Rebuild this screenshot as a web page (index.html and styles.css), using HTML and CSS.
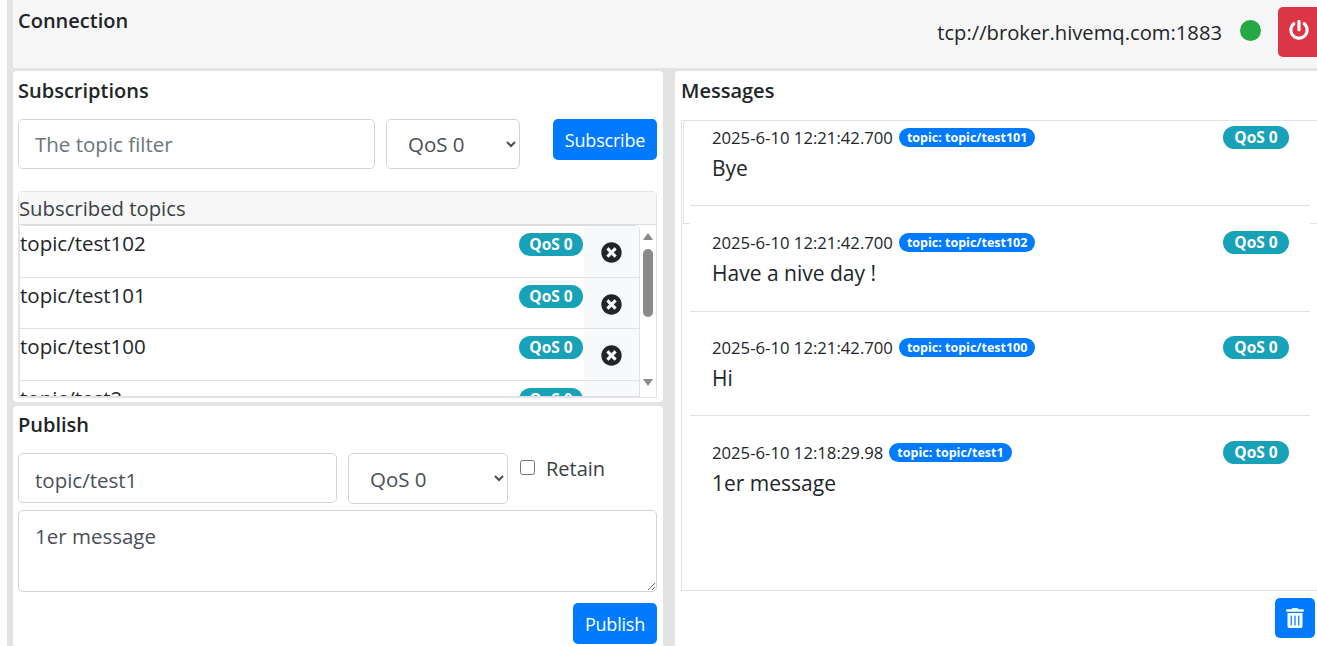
FILE: index.html
```html
<!DOCTYPE html>
<html lang="en">

<head>
    <meta charset="UTF-8">
    <meta name="viewport" content="width=device-width, initial-scale=1.0">
    <title>MQTT Client</title>
    <link rel="stylesheet" href="styles.css">
</head>

<body>
    <svg class="icon-defs" aria-hidden="true">
        <symbol id="i-power" viewBox="0 0 512 512">
            <path d="M400 54.100c63 45 104 118.600 104 201.900 0 136.800-110.800 247.700-247.500 248C120 504.300 8.200 393 8 256.400 7.900 173.100 48.900 99.300 111.800 54.200c11.700-8.300 28-4.800 35 7.700L162.600 90c5.900 10.500 3.100 23.800-6.600 31-41.500 30.800-68 79.600-68 134.900-.1 92.300 74.500 168.100 168 168.100 91.600 0 168.600-74.200 168-169.100-.3-51.800-24.700-101.800-68.100-134-9.700-7.200-12.400-20.500-6.400-30.900l15.800-28.100c7-12.400 23.200-16.100 34.800-7.800zM296 264V24c0-13.300-10.700-24-24-24h-32c-13.300 0-24 10.700-24 24v240c0 13.300 10.700 24 24 24h32c13.300 0 24-10.700 24-24z" />
        </symbol>
        <symbol id="i-close" viewBox="0 0 512 512">
            <path d="M256 8C119 8 8 119 8 256s111 248 248 248 248-111 248-248S393 8 256 8zm121.600 313.100c4.700 4.700 4.700 12.300 0 17L338 377.600c-4.700 4.700-12.300 4.700-17 0L256 312l-65.100 65.600c-4.700 4.700-12.300 4.700-17 0L134.400 338c-4.700-4.700-4.700-12.300 0-17l65.600-65-65.600-65.100c-4.700-4.700-4.700-12.300 0-17l39.600-39.600c4.700-4.700 12.300-4.700 17 0l65 65.700 65.100-65.600c4.700-4.700 12.300-4.700 17 0l39.600 39.600c4.700 4.700 4.700 12.300 0 17L312 256l65.600 65.100z" />
        </symbol>
        <symbol id="i-trash" viewBox="0 0 448 512">
            <path d="M32 464a48 48 0 0 0 48 48h288a48 48 0 0 0 48-48V128H32zm272-256a16 16 0 0 1 32 0v224a16 16 0 0 1-32 0zm-96 0a16 16 0 0 1 32 0v224a16 16 0 0 1-32 0zm-96 0a16 16 0 0 1 32 0v224a16 16 0 0 1-32 0zM432 32H312l-9.400-18.700A24 24 0 0 0 281.100 0H166.800a23.720 23.720 0 0 0-21.400 13.300L136 32H16A16 16 0 0 0 0 48v32a16 16 0 0 0 16 16h416a16 16 0 0 0 16-16V48a16 16 0 0 0-16-16z" />
        </symbol>
    </svg>

    <div class="app">
        <header class="connection">
            <h5>Connection</h5>
            <div class="status">
                <span class="broker">tcp://broker.hivemq.com:1883</span>
                <span class="dot"></span>
                <button class="btn btn-danger btn-power" type="button"><svg class="icon"><use href="#i-power" /></svg></button>
            </div>
        </header>

        <main class="columns">
            <div class="left">
                <section class="card subscriptions">
                    <h5>Subscriptions</h5>
                    <div class="sub-form">
                        <input class="field sub-topic" type="text" placeholder="The topic filter">
                        <select class="field sub-qos">
                            <option>QoS 0</option>
                        </select>
                        <button class="btn btn-primary btn-subscribe" type="button">Subscribe</button>
                    </div>

                    <div class="topics">
                        <div class="topics-header">Subscribed topics</div>
                        <div class="topics-body">
                            <ul class="topic-list">
                                <li class="topic">
                                    <span class="topic-name">topic/test102</span>
                                    <span class="badge badge-info">QoS 0</span>
                                    <span class="topic-remove"><svg class="icon"><use href="#i-close" /></svg></span>
                                </li>
                                <li class="topic">
                                    <span class="topic-name">topic/test101</span>
                                    <span class="badge badge-info">QoS 0</span>
                                    <span class="topic-remove"><svg class="icon"><use href="#i-close" /></svg></span>
                                </li>
                                <li class="topic">
                                    <span class="topic-name">topic/test100</span>
                                    <span class="badge badge-info">QoS 0</span>
                                    <span class="topic-remove"><svg class="icon"><use href="#i-close" /></svg></span>
                                </li>
                                <li class="topic">
                                    <span class="topic-name">topic/test2</span>
                                    <span class="badge badge-info">QoS 0</span>
                                    <span class="topic-remove"><svg class="icon"><use href="#i-close" /></svg></span>
                                </li>
                            </ul>
                            <div class="scrollbar">
                                <span class="arrow-up"></span>
                                <span class="thumb"></span>
                                <span class="arrow-down"></span>
                            </div>
                        </div>
                    </div>
                </section>

                <section class="card publish">
                    <h5>Publish</h5>
                    <div class="pub-form">
                        <input class="field pub-topic" type="text" value="topic/test1">
                        <select class="field pub-qos">
                            <option>QoS 0</option>
                        </select>
                        <label class="retain"><input type="checkbox"> Retain</label>
                    </div>
                    <textarea class="field pub-text">1er message</textarea>
                    <div class="actions">
                        <button class="btn btn-primary btn-publish" type="button">Publish</button>
                    </div>
                </section>
            </div>

            <section class="card messages">
                <h5>Messages</h5>
                <div class="message-list">
                    <article class="message">
                        <div class="message-head">
                            <span class="time">2025-6-10 12:21:42.700</span>
                            <span class="badge badge-primary">topic: topic/test101</span>
                            <span class="badge badge-info">QoS 0</span>
                        </div>
                        <p>Bye</p>
                    </article>
                    <article class="message">
                        <div class="message-head">
                            <span class="time">2025-6-10 12:21:42.700</span>
                            <span class="badge badge-primary">topic: topic/test102</span>
                            <span class="badge badge-info">QoS 0</span>
                        </div>
                        <p>Have a nive day !</p>
                    </article>
                    <article class="message">
                        <div class="message-head">
                            <span class="time">2025-6-10 12:21:42.700</span>
                            <span class="badge badge-primary">topic: topic/test100</span>
                            <span class="badge badge-info">QoS 0</span>
                        </div>
                        <p>Hi</p>
                    </article>
                    <article class="message last">
                        <div class="message-head">
                            <span class="time">2025-6-10 12:18:29.98</span>
                            <span class="badge badge-primary">topic: topic/test1</span>
                            <span class="badge badge-info">QoS 0</span>
                        </div>
                        <p>1er message</p>
                    </article>
                </div>
                <div class="actions">
                    <button class="btn btn-primary btn-trash" type="button"><svg class="icon"><use href="#i-trash" /></svg></button>
                </div>
            </section>
        </main>
    </div>
</body>

</html>
```

FILE: styles.css
```css
:root {
    --text: #212529;
    --input-text: #495057;
    --line: #dee2e6;
    --field-line: #ced4da;
    --gutter: #e3e3e3;
    --primary: #007bff;
    --info: #17a2b8;
    --danger: #dc3545;
    --success: #28a745;
}

* {
    box-sizing: border-box;
}

html,
body {
    height: 100%;
}

body {
    margin: 0;
    padding-left: 7px;
    overflow: hidden;
    color: var(--text);
    background: #fff;
    font-family: "Open Sans", "Noto Sans", sans-serif;
    font-size: 20.5px;
}

.icon-defs {
    display: none;
}

.icon {
    display: block;
    fill: currentColor;
}

.app {
    height: 646px;
    padding-left: 6px;
    background: var(--gutter);
    overflow: hidden;
}

h5 {
    margin: 0;
    font-size: 20px;
    font-weight: 600;
    line-height: 24px;
}

/* connection bar */
.connection {
    display: flex;
    justify-content: space-between;
    height: 68px;
    padding: 9px 0 0 5px;
    background: #f7f7f7;
}

.status {
    display: flex;
    align-items: flex-start;
    margin-top: -2px;
}

.broker {
    margin: 12px 18px 0 0;
    font-size: 20.2px;
    line-height: 26px;
}

.dot {
    width: 21px;
    height: 21px;
    margin: 13px 17px 0 0;
    border-radius: 50%;
    background: var(--success);
}

.btn {
    border: 0;
    border-radius: 5px;
    color: #fff;
    font: inherit;
    font-size: 18px;
    letter-spacing: -0.2px;
    padding: 0;
}

.btn-primary {
    background: var(--primary);
}

.btn-danger {
    background: var(--danger);
}

.btn-power {
    display: flex;
    justify-content: center;
    width: 39px;
    height: 50px;
    padding: 13px 0 0 2px;
    border-radius: 5px 0 0 5px;
}

.btn-power .icon {
    width: 20px;
    height: 20px;
}

/* columns */
.columns {
    display: grid;
    grid-template-columns: 650px 642px;
    gap: 12px;
    height: 575px;
    margin-top: 3px;
}

.left {
    display: flex;
    flex-direction: column;
    gap: 4px;
    height: 575px;
}

.card {
    padding: 8px 6px 0 5px;
    background: #fff;
    border-radius: 4px;
    overflow: hidden;
}

.subscriptions {
    height: 331px;
}

.publish {
    flex: 1;
    padding-top: 7px;
    border-radius: 4px 4px 0 0;
}

.field {
    height: 50px;
    border: 1px solid var(--field-line);
    border-radius: 5px;
    background: #fff;
    color: var(--input-text);
    font: inherit;
    padding: 0 16px;
}

select.field {
    padding-left: 17px;
}

.field::placeholder {
    color: #6c757d;
    opacity: 1;
}

.sub-form {
    display: flex;
    align-items: flex-start;
    margin-top: 16px;
}

.sub-topic {
    width: 357px;
    margin-right: 11px;
}

.sub-qos {
    width: 134px;
    margin-right: 33px;
}

.btn-subscribe {
    width: 104px;
    height: 41px;
}

/* subscribed topics */
.topics {
    margin-top: 22px;
    border: 1px solid #e4e4e4;
    border-bottom: 0;
    border-radius: 5px 5px 0 0;
}

.topics-header {
    height: 33px;
    padding-top: 3px;
    background: #f7f7f7;
    border-bottom: 1px solid #dcdcdc;
    color: #3b4147;
    font-size: 20.3px;
    line-height: 26px;
}

.topics-body {
    display: flex;
    height: 173px;
    overflow: hidden;
    border-bottom: 1px solid #e4e4e4;
}

.topic-list {
    flex: 1;
    margin: 0;
    padding: 0;
    list-style: none;
    border: 1px solid var(--line);
    border-radius: 5px 5px 0 0;
    overflow: hidden;
}

.topic {
    display: flex;
    align-items: flex-start;
    height: 51.6px;
    border-bottom: 1px solid var(--line);
}

.topic-name {
    flex: 1;
    line-height: 34px;
}

.badge {
    display: inline-block;
    border-radius: 12px;
    color: #fff;
    font-size: 15.5px;
    font-weight: 700;
    text-align: center;
}

.badge-info {
    width: 66px;
    height: 23px;
    background: var(--info);
    line-height: 23px;
}

.badge-primary {
    height: 19px;
    padding: 0 8px;
    background: var(--primary);
    font-size: 12.5px;
    line-height: 19px;
}

.topic .badge {
    width: 64px;
    margin: 7px 1px 0 0;
}

.topic-remove {
    display: flex;
    justify-content: center;
    width: 55px;
    height: 100%;
    padding-top: 16px;
    background: #f8f9fa;
    color: #212529;
}

.topic-remove .icon {
    width: 21px;
    height: 21px;
}

.scrollbar {
    display: flex;
    flex-direction: column;
    align-items: center;
    width: 16px;
    padding-top: 8px;
}

.arrow-up,
.arrow-down {
    width: 0;
    height: 0;
    border-left: 5px solid transparent;
    border-right: 5px solid transparent;
}

.arrow-up {
    border-bottom: 7px solid #8a8a8a;
}

.arrow-down {
    margin-top: 62px;
    border-top: 7px solid #8a8a8a;
}

.thumb {
    width: 10px;
    height: 68px;
    margin-top: 9px;
    border-radius: 5px;
    background: #8a8a8a;
}

/* publish */
.pub-form {
    display: flex;
    align-items: flex-start;
    margin-top: 16px;
}

.pub-topic {
    width: 319px;
    margin-right: 11px;
    padding-top: 3px;
}

.pub-qos {
    width: 160px;
    height: 51px;
    margin-right: 12px;
    padding-left: 18px;
}

.retain {
    display: flex;
    align-items: center;
    gap: 11px;
    margin-top: 2px;
    font-size: 20px;
    line-height: 28px;
    color: #3b4147;
}

.retain input {
    width: 15px;
    height: 15px;
    margin: -3px 0 0;
}

.pub-text {
    display: block;
    width: 100%;
    height: 82px;
    margin-top: 6px;
    padding-top: 11px;
    line-height: 28px;
}

.actions {
    display: flex;
    justify-content: flex-end;
}

.btn-publish {
    width: 84px;
    height: 41px;
    margin-top: 11px;
}

/* messages */
.messages {
    border-radius: 4px 0 0 0;
    padding-right: 0;
    padding-left: 6px;
}

.message-list {
    height: 471px;
    margin-top: 17px;
    border: 1px solid var(--line);
    border-right: 0;
    overflow: hidden;
}

.message {
    position: relative;
    height: 88px;
    margin: 0 7px 17px 8px;
    padding: 7px 21px 0 22px;
    border-bottom: 1px solid #e2e2e2;
}

.message:first-child {
    height: 85px;
    margin-bottom: 18px;
    padding-top: 5px;
}

.message:nth-child(3) {
    height: 87px;
    margin-bottom: 18px;
}

/* the first item is scrolled a little: its own frame still shows */
.message:first-child::before {
    content: "";
    position: absolute;
    top: -1px;
    left: -7px;
    width: 20px;
    height: 103px;
    border-top: 1px solid var(--line);
    border-left: 1px solid var(--line);
    border-top-left-radius: 5px;
}

.message:nth-child(2)::before,
.message:nth-child(2)::after {
    content: "";
    position: absolute;
    top: -1px;
    width: 7px;
    height: 1px;
    background: #e2e2e2;
}

.message:nth-child(2)::before {
    left: -7px;
}

.message:nth-child(2)::after {
    right: -7px;
}

.message.last {
    border-bottom: 0;
}

.message-head {
    display: flex;
    align-items: center;
    gap: 6px;
    height: 22px;
    font-size: 16.7px;
}

.message-head .badge-info {
    margin-left: auto;
}

.message p {
    margin: 6px 0 0;
    font-size: 21px;
    line-height: 28px;
}

.btn-trash {
    display: flex;
    justify-content: center;
    align-items: center;
    width: 40px;
    height: 40px;
    margin: 7px 2px 0 0;
}

.btn-trash .icon {
    width: 18px;
    height: 20px;
}
```
